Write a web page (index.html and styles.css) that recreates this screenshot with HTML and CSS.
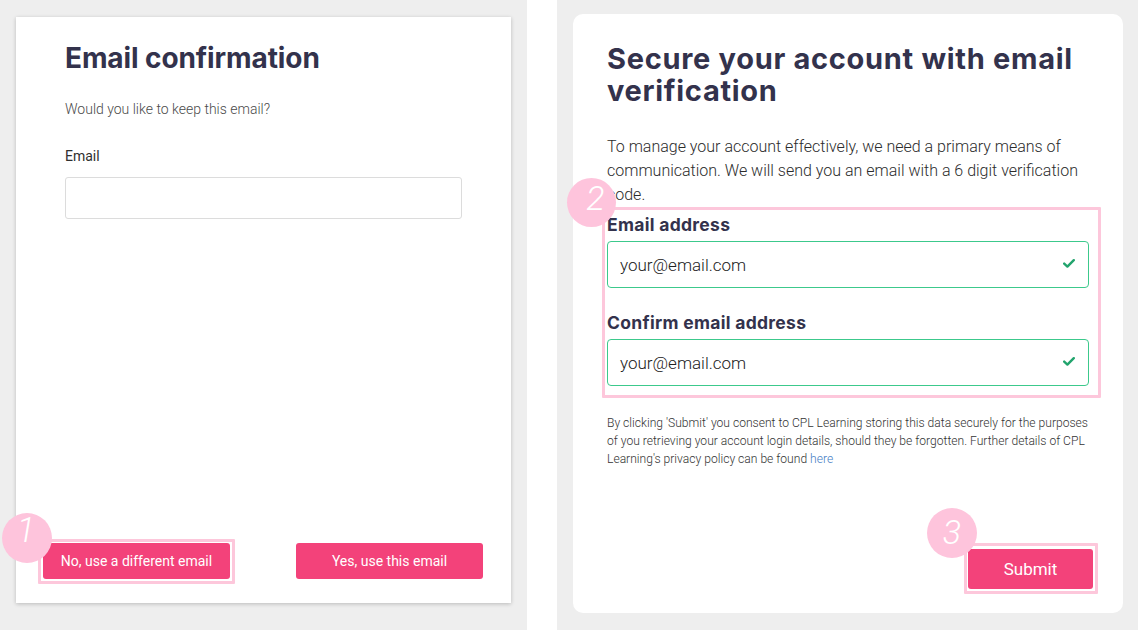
FILE: index.html
```html
<!DOCTYPE html>
<html lang="en">
<head>
<meta charset="utf-8">
<title>Email confirmation</title>
<link rel="stylesheet" href="styles.css">
</head>
<body>
<div class="page">
  <section class="panel panel-left">
    <div class="card card-left">
      <div class="left-body">
        <h1 class="title-left">Email confirmation</h1>
        <p class="sub">Would you like to keep this email?</p>
        <label class="label-sm">Email</label>
        <div class="input-plain"></div>
      </div>
      <div class="left-footer">
        <div class="mark-wrap">
          <button class="btn btn-left">No, use a different email</button>
          <span class="hl hl-1"></span>
          <span class="badge badge-1"><span class="digit digit-1">1</span></span>
        </div>
        <button class="btn btn-left">Yes, use this email</button>
      </div>
    </div>
  </section>
  <div class="gap"></div>
  <section class="panel panel-right">
    <div class="card card-right">
      <h1 class="title-right">Secure your account with email verification</h1>
      <p class="intro">To manage your account effectively, we need a primary means of communication. We will send you an email with a 6 digit verification code.</p>
      <div class="fields">
        <label class="label-lg">Email address</label>
        <div class="input-ok"><span class="val">your@email.com</span>
          <svg class="check" width="12" height="9" viewBox="0 0 12 9"><path d="M1.2 4.6 L4.4 7.6 L10.8 1.2" fill="none" stroke="#22a46d" stroke-width="2.4" stroke-linecap="round" stroke-linejoin="round"/></svg>
        </div>
        <label class="label-lg label-2">Confirm email address</label>
        <div class="input-ok"><span class="val">your@email.com</span>
          <svg class="check" width="12" height="9" viewBox="0 0 12 9"><path d="M1.2 4.6 L4.4 7.6 L10.8 1.2" fill="none" stroke="#22a46d" stroke-width="2.4" stroke-linecap="round" stroke-linejoin="round"/></svg>
        </div>
        <span class="hl hl-2"></span>
        <span class="badge badge-2"><span class="digit digit-2">2</span></span>
      </div>
      <p class="legal">By clicking 'Submit' you consent to CPL Learning storing this data securely for the purposes of you retrieving your account login details, should they be forgotten. Further details of CPL Learning's privacy policy can be found <a class="link" href="#">here</a></p>
      <div class="submit-row">
        <div class="mark-wrap">
          <button class="btn btn-submit">Submit</button>
          <span class="hl hl-3"></span>
          <span class="badge badge-3"><span class="digit digit-3">3</span></span>
        </div>
      </div>
    </div>
  </section>
</div>
</body>
</html>
```

FILE: styles.css
```css
* { box-sizing: border-box; }
html, body { margin: 0; padding: 0; }
body { background: #ffffff; font-family: Roboto, "Liberation Sans", sans-serif; }

.page { display: flex; width: 1138px; height: 630px; }
.panel { background: #eeeeee; height: 630px; display: flex; }
.panel-left { width: 527px; padding: 17px 16px 27px 16px; }
.gap { width: 30px; background: #ffffff; }
.panel-right { flex: 1; padding: 14px 15px 17px 16px; }

.card { background: #fff; display: flex; flex-direction: column; width: 100%; }
.card-left { box-shadow: 0 1px 4px rgba(0,0,0,0.22); padding: 24px 0 24px 0; }
.card-right { border-radius: 10px; padding: 29px 34px 24px 34px; }

.left-body { padding: 0 49px; display: flex; flex-direction: column; }
.title-left {
  margin: 0; font-family: Inter, "Noto Sans", sans-serif; font-weight: 700;
  font-size: 28px; line-height: 34px; color: #33324c; letter-spacing: -0.1px;
}
.sub { margin: 24px 0 0 0; font-size: 14px; line-height: 20px; font-weight: 300; color: #4a4a4a; }
.label-sm { margin-top: 27px; font-size: 14px; line-height: 20px; color: #2f2f2f; }
.input-plain { margin-top: 11px; height: 42px; border: 1.5px solid #dcdcdc; border-radius: 3px; }

.left-footer { margin-top: auto; padding: 0 28px 0 27px; display: flex; justify-content: space-between; }
.btn {
  border: none; border-radius: 3px; background: #f3427a; color: #fff;
  font-family: Roboto, "Liberation Sans", sans-serif; cursor: pointer; display: block;
}
.btn-left { width: 187px; height: 36px; font-size: 14px; font-weight: 400; }

.mark-wrap { position: relative; }
.hl {
  position: absolute; border: 3px solid #fdc7db; border-radius: 1px; pointer-events: none;
}
.hl-1 { top: -4px; left: -5px; right: -5px; bottom: -5px; }
.hl-2 { top: -7px; left: -5px; right: -12px; bottom: -12px; }
.hl-3 { top: -6px; left: -4px; right: -5px; bottom: -5px; }

.badge {
  position: absolute; width: 50px; height: 50px; border-radius: 50%;
  background: #fec4dc; display: flex; align-items: center; justify-content: center;
}
.badge-1 { left: -41px; top: -30px; }
.badge-2 { left: -40px; top: -36px; width: 49px; height: 49px; }
.badge-3 { left: -41px; top: -41px; }
.digit {
  color: #fff; font-family: Roboto, "DejaVu Sans", sans-serif; font-weight: 300;
  font-size: 34px; line-height: 1; font-style: italic;
}
.digit-1 { transform: translate(-1px, -9px) scaleY(1.05); }
.digit-2 { transform: translate(4px, -5px); }
.digit-3 { transform: translate(0px, -1px); }

.title-right {
  margin: 0; font-family: Inter, "Noto Sans", sans-serif; font-weight: 700;
  font-size: 29px; line-height: 32px; color: #33324c; letter-spacing: 0.7px;
}
.intro { margin: 28px 0 0 0; font-size: 16px; line-height: 24px; font-weight: 300; color: #2c2c2c; }
.fields { position: relative; margin-top: 7px; display: flex; flex-direction: column; }
.label-lg {
  font-family: Inter, "Noto Sans", sans-serif; font-weight: 700; font-size: 17.5px;
  line-height: 22px; color: #33324c; letter-spacing: 0.3px;
}
.label-2 { margin-top: 24px; }
.input-ok {
  margin-top: 5px; height: 47px; border: 1.5px solid #3cc98c; border-radius: 4px;
  display: flex; align-items: center; justify-content: space-between; padding: 0 13px 0 12px;
}
.val { font-size: 17px; font-weight: 300; color: #222; }
.check { display: block; margin-top: -2px; }

.legal { margin: 28px 0 0 0; font-size: 12.1px; line-height: 18px; color: #333; font-weight: 300; }
.link { color: #3f7cc4; text-decoration: none; }

.submit-row { margin-top: auto; display: flex; justify-content: flex-end; margin-right: -4px; }
.btn-submit { width: 125px; height: 40px; font-size: 17px; font-weight: 400; }
```
